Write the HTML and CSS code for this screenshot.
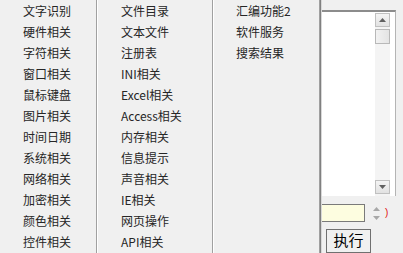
FILE: index.html
```html
<!DOCTYPE html>
<html>
<head>
<meta charset="utf-8">
<link rel="stylesheet" href="styles.css">
</head>
<body>
<div class="screen">
  <div class="menu">
    <ul class="col">
      <li>文字识别</li><li>硬件相关</li><li>字符相关</li><li>窗口相关</li>
      <li>鼠标键盘</li><li>图片相关</li><li>时间日期</li><li>系统相关</li>
      <li>网络相关</li><li>加密相关</li><li>颜色相关</li><li>控件相关</li>
    </ul>
    <ul class="col">
      <li>文件目录</li><li>文本文件</li><li>注册表</li><li>INI相关</li>
      <li>Excel相关</li><li>Access相关</li><li>内存相关</li><li>信息提示</li>
      <li>声音相关</li><li>IE相关</li><li>网页操作</li><li>API相关</li>
    </ul>
    <ul class="col last">
      <li>汇编功能2</li><li>软件服务</li><li>搜索结果</li>
    </ul>
  </div>
  <div class="side">
    <div class="memo">
      <div class="memo-text"></div>
      <div class="vscroll">
        <div class="sbtn"><svg width="7" height="4" viewBox="0 0 7 4"><path d="M0 4 L3.5 0 L7 4Z" fill="#606060"/></svg></div>
        <div class="thumb"></div>
        <div class="track"></div>
        <div class="sbtn"><svg width="7" height="4" viewBox="0 0 7 4"><path d="M0 0 L3.5 4 L7 0Z" fill="#606060"/></svg></div>
      </div>
    </div>
    <div class="input-row">
      <div class="field"></div>
      <div class="spin">
        <svg width="7" height="4" viewBox="0 0 7 4"><path d="M0 4 L3.5 0 L7 4Z" fill="#a8a8a8"/></svg>
        <svg width="7" height="4" viewBox="0 0 7 4"><path d="M0 0 L3.5 4 L7 0Z" fill="#a8a8a8"/></svg>
      </div>
      <span class="paren">)</span>
    </div>
    <div class="btn-row"><div class="btn">执行</div></div>
  </div>
</div>
</body>
</html>
```
FILE: styles.css
```css
html, body {
  margin: 0;
  padding: 0;
  background: #f0f0f0;
  overflow: hidden;
}
.screen {
  display: flex;
  width: 403px;
  height: 253px;
  font-family: "Noto Sans CJK SC", "Microsoft YaHei", sans-serif;
}
.menu {
  display: flex;
  width: 319px;
  height: 253px;
  background: #f0f0f0;
  border-right: 1px solid #a0a0a0;
  box-shadow: 1px 0 0 #808080, 2px 0 0 #d8d8d8;
  position: relative;
  z-index: 2;
}
.col {
  list-style: none;
  margin: 0;
  padding: 0;
  width: 96px;
  border-right: 1px solid #a0a0a0;
  box-shadow: 1px 0 0 #ffffff;
  margin-right: 1px;
}
.col:nth-child(2) {
  width: 114px;
}
.col.last {
  flex: 1;
  border-right: none;
  box-shadow: none;
  margin-right: 0;
}
.col li {
  height: 21px;
  line-height: 21px;
  padding-left: 23px;
  font-size: 12px;
  color: #262626;
  white-space: nowrap;
}
.col.last li { padding-left: 22px; }
.side {
  flex: 1;
  display: flex;
  flex-direction: column;
  padding-top: 10px;
}
.memo {
  display: flex;
  width: 70px;
  height: 191px;
  border-top: 2px solid #8c8c8c;
  border-right: 1px solid #b4b4b4;
  background: #ffffff;
  padding: 1px 5px 0 0;
}
.memo-text { flex: 1; }
.vscroll {
  width: 15px;
  display: flex;
  flex-direction: column;
  background: #f4f4f4;
  padding-bottom: 2px;
}
.sbtn {
  height: 14px;
  border: 1px solid #c0c0c0;
  background: linear-gradient(#f4f4f4, #e2e2e2);
  box-sizing: border-box;
  display: flex;
  align-items: center;
  justify-content: center;
}
.thumb {
  height: 15px;
  margin-top: 2px;
  border: 1px solid #b8b8b8;
  background: linear-gradient(90deg, #f2f2f2, #e4e4e4);
  box-sizing: border-box;
}
.track { flex: 1; }
.input-row {
  display: flex;
  align-items: center;
  height: 18px;
  margin-top: 8px;
}
.field {
  width: 45px;
  height: 18px;
  background: #fdfde0;
  border: 1px solid #7a7a7a;
  border-left: none;
  box-sizing: border-box;
}
.spin {
  display: flex;
  flex-direction: column;
  gap: 5px;
  margin-left: 6px;
  width: 10px;
  align-items: center;
}
.paren {
  margin-left: 4px;
  color: #e01010;
  font-family: "Liberation Sans", sans-serif;
  font-size: 10px;
  line-height: 10px;
}
.btn-row {
  margin-top: 7px;
  padding-left: 6px;
}
.btn {
  width: 45px;
  height: 24px;
  border: 1px solid #707070;
  box-sizing: border-box;
  background: #f0f0f0;
  font-size: 15px;
  line-height: 20px;
  text-align: center;
  color: #000;
}
```
